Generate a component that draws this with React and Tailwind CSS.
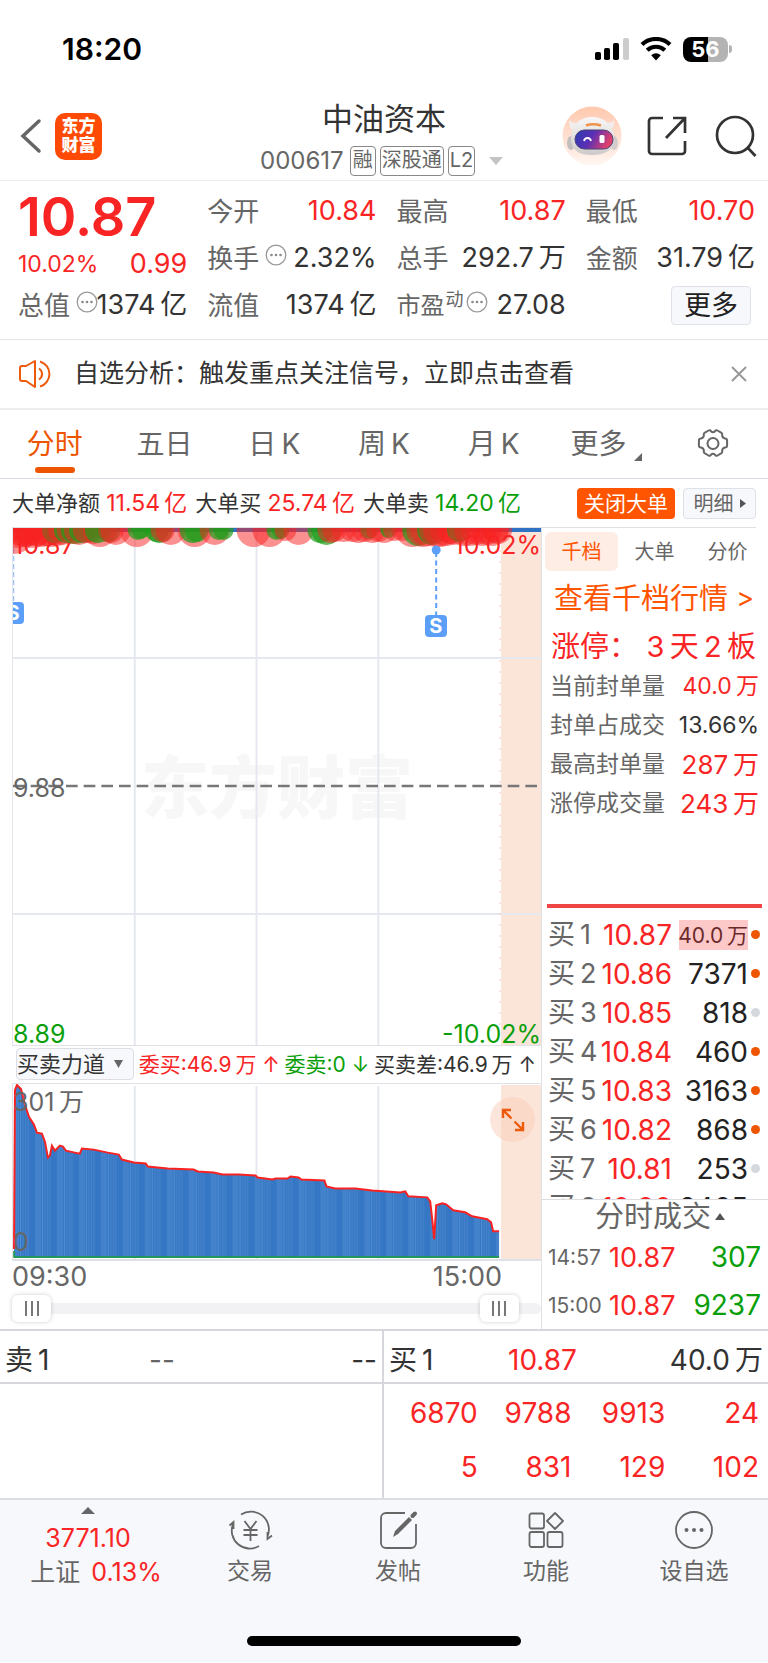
import React, { useState } from 'react';

const quoteColumns = [
  [
    { label: '今开', value: '10.84', up: true },
    { label: '换手', value: '2.32%', info: true },
    { label: '流值', value: '1374\u2009亿' },
  ],
  [
    { label: '最高', value: '10.87', up: true },
    { label: '总手', value: '292.7\u2009万' },
    { label: '市盈', sup: '动', value: '27.08', info: true },
  ],
];

const periods = ['分时', '五日', '日\u2009K', '周\u2009K', '月\u2009K'];

const limitStats = [
  { label: '当前封单量', value: '40.0\u2009万', style: 'text-[23px] text-[#f92525]' },
  { label: '封单占成交', value: '13.66%', style: 'text-[23px] text-[#333]' },
  { label: '最高封单量', value: '287\u2009万', style: 'text-[26px] text-[#f92525]' },
  { label: '涨停成交量', value: '243\u2009万', style: 'text-[26px] text-[#f92525]' },
];

const bids = [
  { level: 1, price: '10.87', volume: '40.0\u2009万', active: true },
  { level: 2, price: '10.86', volume: '7371', active: true },
  { level: 3, price: '10.85', volume: '818', active: false },
  { level: 4, price: '10.84', volume: '460', active: true },
  { level: 5, price: '10.83', volume: '3163', active: true },
  { level: 6, price: '10.82', volume: '868', active: true },
  { level: 7, price: '10.81', volume: '253', active: false },
  { level: 8, price: '10.80', volume: '2465', active: true },
];

const trades = [
  { time: '14:57', price: '10.87', volume: '307' },
  { time: '15:00', price: '10.87', volume: '9237' },
];

const queue = [
  ['6870', '9788', '9913', '24'],
  ['5', '831', '129', '102'],
];

// x, radius, color of the big-order bubbles along the price line
const R = '#f82222';
const G = '#1f9d1a';
const bubbles = [
  [0, 24, R], [4, 18, R], [8, 16, R], [12, 17, R], [16, 16, R], [20, 18, R], [24, 16, R], [28, 17, R],
  [33, 16, R], [38, 17, R], [42, 13, G], [44, 16, R], [50, 15, R], [54, 13, G], [58, 14, R], [62, 14, G],
  [66, 15, R], [69, 13, G], [73, 13, R], [78, 12, G], [80, 14, R], [87, 17, R], [85, 13, G], [96, 12, G],
  [103, 15, R], [98, 13, R], [124, 17, R], [125, 10, G], [128, 9, G], [144, 12, G], [147, 13, G],
  [150, 12, R], [158, 15, R], [182, 17, R], [180, 13, G], [184, 12, G], [202, 15, R], [206, 10, G],
  [211, 10, G], [241, 17, R], [257, 17, R], [264, 10, G], [268, 9, G], [273, 11, R], [286, 15, R],
  [308, 13, G], [314, 15, G], [318, 13, R], [322, 12, R], [331, 12, R], [340, 12, R], [346, 13, R],
  [352, 12, R], [357, 9, G], [360, 13, R], [366, 12, R], [372, 13, R], [376, 8, G], [382, 11, R],
  [390, 11, R], [400, 17, R], [406, 16, G], [411, 17, R], [414, 16, R], [420, 15, G], [424, 17, R],
  [428, 17, R], [434, 16, R], [438, 14, R], [442, 15, R], [447, 12, G], [452, 16, R], [458, 16, R],
  [464, 15, R], [470, 16, R], [475, 15, R], [480, 16, R], [484, 13, R], [486, 14, R],
];

const forceLine =
  '1,166 2,6 4,1 8,5 12,21 16,33 21,41 24,49 29,50 32,58 35,74 37,72 39,62 42,67 47,62 50,63 53,67 62,69 67,70 69,65 81,66 95,69 106,71 109,76 121,79 133,80 135,83 155,85 181,86 185,88 201,89 210,91 226,91 243,92 245,94 260,96 263,95 275,95 278,93 286,94 289,96 312,97 314,103 323,105 343,105 360,107 388,109 393,108 396,113 415,114 418,118 420,136 422,156 424,122 430,120 434,121 441,127 453,129 460,133 475,136 479,139 481,148 487,148';

const InfoDot = () => (
  <svg className="w-[22px] h-[22px] mb-2 shrink-0" viewBox="0 0 22 22">
    <circle cx="11" cy="11" r="9.8" fill="none" stroke="#999" strokeWidth="1.3" />
    <circle cx="6.5" cy="11" r="1.3" fill="#888" />
    <circle cx="11" cy="11" r="1.3" fill="#888" />
    <circle cx="15.5" cy="11" r="1.3" fill="#888" />
  </svg>
);

const QuoteItem = ({ label, sup, value, info, up }) => (
  <div className="flex items-center justify-between h-[47px] whitespace-nowrap">
    <span className="flex items-center text-[#666]">
      <span className={sup ? 'text-[24px]' : 'text-[26px]'}>{label}</span>
      {sup && <span className="mb-3 ml-px text-[18px]">{sup}</span>}
      {info && <span className={sup ? 'ml-[2px] flex' : 'ml-[6px] -mr-2 flex'}><InfoDot /></span>}
    </span>
    <span className={up ? 'text-[27px] text-[#f92525]' : 'text-[27px] text-[#333]'}>{value}</span>
  </div>
);

const StatusBar = () => (
  <div className="flex items-center justify-between h-[98px] pl-[62px] pr-9">
    <span className="text-[30px] font-semibold text-black">18:20</span>
    <div className="flex items-center gap-[11px]">
      <svg className="w-[34px] h-6" viewBox="0 0 34 24">
        <rect x="0" y="15" width="6" height="8" rx="1.8" />
        <rect x="9" y="11" width="6" height="12" rx="1.8" />
        <rect x="18" y="6" width="6" height="17" rx="1.8" />
        <rect x="28" y="1" width="6" height="22" rx="1.8" fill="#ccc" />
      </svg>
      <svg className="w-8 h-6" viewBox="0 0 32 24">
        <path d="M2 7.5a20.5 20.5 0 0 1 28 0" fill="none" stroke="#000" strokeWidth="4.2" />
        <path d="M7.2 13.2a13 13 0 0 1 17.6 0" fill="none" stroke="#000" strokeWidth="4.2" />
        <path d="M11.2 18.2a7 7 0 0 1 9.6 0L16 23.4z" />
      </svg>
      <div className="flex items-center gap-px">
        <span className="flex items-center justify-center w-[45px] h-[25px] rounded-lg bg-linear-to-r from-black from-55% to-[#b3b3b3] to-55% text-white text-[22px] font-bold leading-none">
          56
        </span>
        <span className="w-[3px] h-2 rounded-r-full bg-[#b3b3b3]"></span>
      </div>
    </div>
  </div>
);

const Robot = () => (
  <svg className="w-[60px] h-[60px]" viewBox="0 0 60 60">
    <defs>
      <linearGradient id="halo" x1="0" y1="0" x2="0" y2="1">
        <stop offset="0" stopColor="#ffc8ae" />
        <stop offset="1" stopColor="#fff6f2" />
      </linearGradient>
      <linearGradient id="shell" x1="0" y1="0" x2="0" y2="1">
        <stop offset="0" stopColor="#f8f6f6" />
        <stop offset="1" stopColor="#cfcaca" />
      </linearGradient>
      <linearGradient id="visor" x1="0" y1="0" x2="1" y2="0.3">
        <stop offset="0" stopColor="#2a3cb0" />
        <stop offset="0.5" stopColor="#5a2fb5" />
        <stop offset="1" stopColor="#e0406c" />
      </linearGradient>
    </defs>
    <circle cx="30" cy="30" r="29.5" fill="url(#halo)" />
    <path d="M7 14c0 5 1 8 4 11l7-8c-5 0-8 0-11-3zM52 14c1 5-1 8-4 11l-6-8c5 0 8 0 10-3z" fill="#f1eded" />
    <ellipse cx="9" cy="37" rx="4" ry="7" fill="#c3bebe" />
    <ellipse cx="52" cy="37" rx="4" ry="7" fill="#d2cccc" />
    <path d="M9 32c0-13 9-21 21-21s22 8 22 21c0 12-8 17-22 17S9 44 9 32z" fill="url(#shell)" />
    <rect x="13" y="24" width="38" height="19" rx="9.5" fill="url(#visor)" stroke="#4a4478" strokeWidth="1" />
    <path d="M24 19.5c4-1.5 10-1.5 15 0" fill="none" stroke="#f0934a" strokeWidth="2.5" />
    <path d="M22 35c1-4 6-4 7 0" fill="none" stroke="#fff" strokeWidth="1.8" />
    <rect x="37.5" y="29" width="5" height="8" rx="1.5" fill="#fff" />
  </svg>
);

const Header = () => (
  <header className="relative flex items-center justify-between h-[83px] pl-5 pr-[11px] pb-[6px] border-b border-[#ececef]">
    <div className="flex items-center gap-3">
      <button aria-label="返回">
        <svg className="w-[23px] h-9" viewBox="0 0 23 36">
          <path d="M19 3L3 18l16 15" fill="none" stroke="#666" strokeWidth="3.5" strokeLinecap="round" />
        </svg>
      </button>
      <a href="#home" className="flex items-center justify-center w-[47px] h-[47px] rounded-[10px] bg-[#ff4a05] text-white text-[17px]/[19px] font-black">
        <span>东方<br />财富</span>
      </a>
    </div>
    <button className="absolute inset-x-0 top-0 mx-auto w-[252px]">
      <span className="block mt-[2px] text-[31px]/[38px] text-[#333]">中油资本</span>
      <span className="flex items-center gap-1 mt-2 pl-[2px] text-[20px]/[26px] text-[#666] whitespace-nowrap">
        <span className="mr-[2px] text-[24px]">000617</span>
        <span className="h-[30px] px-[2px] border border-[#888] rounded">融</span>
        <span className="h-[30px] px-px border border-[#888] rounded">深股通</span>
        <span className="h-[30px] px-px border border-[#888] rounded">L2</span>
        <svg className="w-[14px] h-2 ml-[10px] shrink-0" viewBox="0 0 14 8">
          <path d="M0 0h14L7 8z" fill="#c4c4c4" />
        </svg>
      </span>
    </button>
    <div className="flex items-center">
      <button aria-label="智能助手" className="mr-[25px]"><Robot /></button>
      <button aria-label="分享" className="mr-7">
        <svg className="w-10 h-10" viewBox="0 0 40 40" fill="none" stroke="#333" strokeWidth="2.7">
          <path d="M16 2H5a3 3 0 0 0-3 3v30a3 3 0 0 0 3 3h30a3 3 0 0 0 3-3V25M26 2h12v15M38 2L19 22" />
        </svg>
      </button>
      <button aria-label="搜索">
        <svg className="w-[42px] h-[42px]" viewBox="0 0 42 42" fill="none" stroke="#333" strokeWidth="2.7">
          <circle cx="20" cy="20" r="18" />
          <path d="M32 32l8.5 9" />
        </svg>
      </button>
    </div>
  </header>
);

const Quote = () => (
  <section className="grid grid-cols-4 gap-x-5 pt-[7px] pb-[10px] pl-[18px] pr-[13px] border-b border-[#e6e6ea]">
    <div className="flex flex-col">
      <strong className="h-[57px] text-[54px]/[57px] font-semibold text-[#f92525]">10.87</strong>
      <div className="flex items-end justify-between h-[37px] leading-9 text-[#f92525]">
        <span className="text-[23px]">10.02%</span>
        <span className="text-[27px]">0.99</span>
      </div>
      <QuoteItem label="总值" value={'1374\u2009亿'} info />
    </div>
    {quoteColumns.map((col, i) => (
      <div key={i}>
        {col.map((item) => (
          <QuoteItem key={item.label} {...item} />
        ))}
      </div>
    ))}
    <div>
      <QuoteItem label="最低" value="10.70" up />
      <QuoteItem label="金额" value={'31.79\u2009亿'} />
      <div className="flex items-center justify-end h-[47px] pr-1">
        <button className="w-20 h-[39px] rounded border border-[#dfe1e8] bg-[#f7f8fb] text-[27px] leading-none text-[#222]">更多</button>
      </div>
    </div>
  </section>
);

const Notice = ({ onClose }) => (
  <div className="flex items-center h-[70px] pl-[18px] pr-5 border-b-2 border-[#ededf0]">
    <svg className="w-9 h-[30px]" viewBox="0 0 36 30" fill="none" stroke="#ee5a0c" strokeWidth="2">
      <path d="M17 2v26L8 22H4a2 2 0 0 1-2-2V9a2 2 0 0 1 2-2h4z" strokeLinejoin="round" />
      <path d="M21 9.5a6.5 6.5 0 0 1 0 11M22 2.5a13 13 0 0 1 0 25" />
    </svg>
    <a href="#analysis" className="ml-5 text-[25px] text-[#333] whitespace-nowrap">自选分析：触发重点关注信号，立即点击查看</a>
    <button aria-label="关闭" className="ml-auto" onClick={onClose}>
      <svg className="w-[18px] h-[18px]" viewBox="0 0 18 18">
        <path d="M2 2l14 14M16 2L2 16" stroke="#999" strokeWidth="2" />
      </svg>
    </button>
  </div>
);

const PeriodTabs = ({ period, setPeriod }) => (
  <nav className="grid grid-cols-7 h-[69px] border-b border-[#dcdce4] text-[28px] text-[#666]">
    {periods.map((p) => (
      <button
        key={p}
        onClick={() => setPeriod(p)}
        className={p === period ? 'flex flex-col items-center pt-[13px] text-[#ee5500]' : 'flex flex-col items-center pt-[13px]'}
      >
        <span className="leading-[42px]">{p}</span>
        {p === period && <span className="w-10 h-[6px] mt-[2px] rounded-full bg-[#ee5500]"></span>}
      </button>
    ))}
    <button className="flex items-start justify-center gap-2 pt-[13px] pl-[6px] leading-[42px]">
      更多
      <svg className="w-2 h-2 mt-[30px]" viewBox="0 0 8 8"><path d="M8 0v8H0z" fill="#666" /></svg>
    </button>
    <button aria-label="设置" className="flex items-center justify-center">
      <svg className="w-8 h-8" viewBox="0 0 32 32" fill="none" stroke="#666" strokeWidth="2">
        <path d="M11.5 2.5q1.5-1 2.5.7 2 2 4 0 1-1.7 2.5-.7l4 2.3q1.2 1 .6 2.5.3 2.7 3 3.2 1.9 0 2 2v5q-.1 2-2 2-2.7.5-3 3.2.6 1.5-.6 2.5l-4 2.3q-1.5 1-2.5-.7-2-2-4 0-1 1.7-2.5.7l-4-2.3q-1.2-1-.6-2.5-.3-2.7-3-3.2-1.9 0-2-2v-5q.1-2 2-2 2.7-.5 3-3.2-.6-1.5.6-2.5z" strokeLinejoin="round" />
        <circle cx="16" cy="15.5" r="5.5" />
      </svg>
    </button>
  </nav>
);

const SignalTag = () => (
  <span className="flex items-center justify-center w-[22px] h-[22px] rounded bg-[#5b9ff8] text-white text-[20px] font-bold leading-none">S</span>
);

const PriceChart = () => (
  <div className="relative h-[517px] border-l border-[#e3e5ea] overflow-hidden text-[25px] leading-5">
    <span className="absolute inset-x-0 top-[192px] text-center text-[68px]/[136px] font-black text-[#f7f7f7]">东方财富</span>
    <svg className="absolute inset-0 w-full h-full" viewBox="0 0 529 517" preserveAspectRatio="none">
      <rect x="489" y="0" width="40" height="517" fill="#fbe5d9" />
      <path d="M0 130h529M0 386h529M122 0v517M244 0v517M366 0v517" stroke="#e6e8ef" strokeWidth="2" />
      <path d="M0 258h529" stroke="#777" strokeWidth="2.4" strokeDasharray="11.7 6" />
      <path d="M488 22v480" stroke="#fbc9c0" strokeWidth="1" strokeDasharray="2 9" />
      <path d="M.5 20v58" stroke="#9cc3f8" strokeWidth="1.5" strokeDasharray="5 3" />
      <path d="M424 24v64" stroke="#5b9ff8" strokeWidth="2" strokeDasharray="5 3.5" />
    </svg>
    <span className="absolute left-0 top-[7px] text-[#f92525]">10.87</span>
    <span className="absolute right-0 top-[7px] text-[#f92525]">10.02%</span>
    <span className="absolute left-0 top-[250px] text-[#666]">9.88</span>
    <span className="absolute left-0 bottom-px text-[#0a9f0a]">8.89</span>
    <span className="absolute right-0 bottom-px text-[#0a9f0a]">-10.02%</span>
    <svg className="absolute inset-0 w-full h-full" viewBox="0 0 529 517" preserveAspectRatio="none">
      <path d="M0 2h529" stroke="#2f72c4" strokeWidth="4" />
      {bubbles.map(([x, r, color], i) => (
        <circle key={i} cx={x} cy="2" r={r} fill={color} fillOpacity={color === R ? 0.5 : 0.7} />
      ))}
      <circle cx="424" cy="22" r="4.5" fill="#5b9ff8" />
    </svg>
    <span className="absolute -left-[11px] top-[74px]"><SignalTag /></span>
    <span className="absolute left-[78%] top-[87px]"><SignalTag /></span>
  </div>
);

const ForceBar = () => (
  <div className="flex items-center justify-between h-[39px] pl-1 pr-[5px] border-y border-[#dfe1e6] text-[21px] whitespace-nowrap">
    <div className="relative w-[118px]">
      <select aria-label="副图指标" className="w-full h-8 p-0 rounded border border-[#dcdee4] bg-[#f7f8fb] text-[22px] leading-none text-[#333] appearance-none">
        <option>买卖力道</option>
      </select>
      <svg className="absolute right-[11px] top-3 w-[9px] h-2 pointer-events-none" viewBox="0 0 9 8"><path d="M0 0h9L4.5 8z" fill="#666" /></svg>
    </div>
    <span className="text-[#f92525]">委买:46.9{'\u2009'}万 ↑</span>
    <span className="text-[#0a9f0a]">委卖:0 ↓</span>
    <span className="text-[#333]">买卖差:46.9{'\u2009'}万 ↑</span>
  </div>
);

const ForceChart = () => (
  <div className="relative h-[177px] border-l border-b-2 border-[#dfe1e6] text-[25px] leading-none text-[#666]">
    <svg className="absolute inset-0 w-full h-full" viewBox="0 0 529 176" preserveAspectRatio="none">
      <defs>
        <pattern id="bars" width="22" height="176" patternUnits="userSpaceOnUse">
          <rect width="22" height="176" fill="#3577c4" />
          <path d="M1 0v176M3 0v176M5 0v176M7.5 0v176" stroke="#5590d3" strokeWidth="0.9" />
          <path d="M10 0v176M12.5 0v176M15 0v176" stroke="#4582cb" strokeWidth="1.2" />
        </pattern>
      </defs>
      <rect x="489" y="1" width="40" height="175" fill="#fbe5d9" />
      <path d="M122 2v174M244 2v174M366 2v174" stroke="#e6e8ef" strokeWidth="2" />
      <polygon points={`1,175 ${forceLine} 487,175`} fill="url(#bars)" />
      <polyline points={forceLine} fill="none" stroke="#f82222" strokeWidth="2" />
      <path d="M1 168v6h486" fill="none" stroke="#1f9d3a" strokeWidth="1.6" />
    </svg>
    <span className="absolute left-0 top-[6px]">301{'\u2009'}万</span>
    <span className="absolute left-0 bottom-1">0</span>
    <button aria-label="全屏" className="absolute right-[6px] top-[13px] flex items-center justify-center w-[45px] h-[45px] rounded-full bg-[#f9cdb8]/50">
      <svg className="w-6 h-6" viewBox="0 0 24 24" fill="none" stroke="#ee5a0c" strokeWidth="2.4">
        <path d="M10 2H2v8M2 2l8.5 8.5M14 22h8v-8M22 22l-8.5-8.5" />
      </svg>
    </button>
  </div>
);

const RangeSlider = () => {
  const [range, setRange] = useState([0, 955]);
  const thumb =
    'absolute inset-x-0 top-0 w-full h-[27px] appearance-none bg-transparent pointer-events-none [&::-webkit-slider-thumb]:pointer-events-auto [&::-webkit-slider-thumb]:appearance-none [&::-webkit-slider-thumb]:w-[39px] [&::-webkit-slider-thumb]:h-[27px] [&::-webkit-slider-thumb]:rounded-md [&::-webkit-slider-thumb]:bg-white [&::-webkit-slider-thumb]:shadow-[0_0_4px_rgba(0,0,0,0.2)] [&::-webkit-slider-thumb]:bg-[linear-gradient(90deg,#777_2px,transparent_2px,transparent_6px,#777_6px,#777_8px,transparent_8px,transparent_12px,#777_12px)] [&::-webkit-slider-thumb]:bg-[length:14px_15px] [&::-webkit-slider-thumb]:bg-center [&::-webkit-slider-thumb]:bg-no-repeat';
  return (
    <div className="relative flex items-center h-[27px] mt-[3px]">
      <div className="w-full h-[11px] rounded-full bg-[#f2f2f5]"></div>
      <input type="range" aria-label="开始时间" min="0" max="1000" value={range[0]} onChange={(e) => setRange([Number(e.target.value), range[1]])} className={thumb} />
      <input type="range" aria-label="结束时间" min="0" max="1000" value={range[1]} onChange={(e) => setRange([range[0], Number(e.target.value)])} className={thumb} />
    </div>
  );
};

const OrderBook = () => (
  <aside className="w-[227px] shrink-0 border-l border-[#dfe1e6] whitespace-nowrap">
    <div className="flex pt-1 pl-[3px] pr-1 text-[20px] text-[#666]">
      <button className="flex-1 h-[39px] rounded-md bg-[#feede5] text-[#ff5500]">千档</button>
      <button className="flex-1 h-[39px]">大单</button>
      <button className="flex-1 h-[39px]">分价</button>
    </div>
    <a href="#depth" className="flex items-center justify-between h-[55px] pl-3 pr-[14px] text-[29px] text-[#ff5500]">
      查看千档行情<span className="text-[27px]">&gt;</span>
    </a>
    <div className="flex items-center justify-between h-[41px] pl-[9px] pr-3 text-[29px] text-[#f92525]">
      <span>涨停：</span>
      <span>3{'\u2009'}天{'\u2009'}2{'\u2009'}板</span>
    </div>
    <table className="w-full">
      <tbody>
        {limitStats.map((s) => (
          <tr key={s.label} className="h-[39px] leading-none">
            <th className="p-0 pl-2 text-left text-[23px] font-normal text-[#666]">{s.label}</th>
            <td className={`p-0 pr-[9px] text-right ${s.style}`}>{s.value}</td>
          </tr>
        ))}
      </tbody>
    </table>
    <div className="h-1 mt-[81px] ml-[5px] mr-[6px] bg-[#f04545]"></div>
    <div className="h-[292px] pt-[7px] pl-[6px] pr-[8px] overflow-hidden border-b border-[#dcdde2]">
      <table className="w-full table-fixed">
        <tbody>
          {bids.map((b) => (
            <tr key={b.level} className="h-[39px] text-[28px] leading-none">
              <th className="p-0 w-[50px] text-left text-[27px] font-normal text-[#666]">买{'\u2009'}{b.level}</th>
              <td className="p-0 w-[74px] text-right text-[#f92525]">{b.price}</td>
              <td className="p-0 text-right text-[#222]">
                {b.level === 1 ? (
                  <span className="inline-flex items-center justify-end w-[69px] h-[30px] align-middle bg-[#fdc8c8] text-[21px] text-[#6b2a2a]">{b.volume}</span>
                ) : (
                  b.volume
                )}
              </td>
              <td className="p-0 w-3">
                <span className={b.active ? 'block ml-auto w-[9px] h-[9px] rounded-full bg-[#ee5500]' : 'block ml-auto w-[9px] h-[9px] rounded-full bg-[#d5d8de]'}></span>
              </td>
            </tr>
          ))}
        </tbody>
      </table>
    </div>
    <button className="flex items-center justify-center gap-1 w-full h-[33px] pl-[10px] text-[29px] leading-none text-[#666]">
      分时成交
      <svg className="w-[10px] h-[7px]" viewBox="0 0 10 7"><path d="M5 0l5 7H0z" fill="#555" /></svg>
    </button>
    <table className="w-full table-fixed">
      <tbody>
        {trades.map((t) => (
          <tr key={t.time} className="h-12 text-[27px] leading-none">
            <td className="p-0 pl-[6px] w-[67px] text-[21px] text-[#666]">{t.time}</td>
            <td className="p-0 text-[#f92525]">{t.price}</td>
            <td className="p-0 pr-[7px] text-right text-[28px] text-[#0a9f0a]">{t.volume}</td>
          </tr>
        ))}
      </tbody>
    </table>
  </aside>
);

const BestQuote = () => (
  <section className="grid grid-cols-2 border-t-2 border-[#d5d7dd] text-[28px]">
    <div className="border-r-2 border-[#d5d7dd]">
      <div className="grid grid-cols-3 items-center h-[53px] pt-[6px] px-[5px] border-b-2 border-[#d5d7dd] text-[#333]">
        <span>卖{'\u2009'}1</span>
        <span className="pl-5 text-[#666]">--</span>
        <span className="text-right">--</span>
      </div>
    </div>
    <div>
      <div className="grid grid-cols-[115fr_134fr_125fr] items-center h-[53px] pt-[6px] px-[5px] border-b-2 border-[#d5d7dd] text-[#333]">
        <span>买{'\u2009'}1</span>
        <span className="pl-1 text-[#f92525]">10.87</span>
        <span className="text-right">40.0{'\u2009'}万</span>
      </div>
      <div className="pt-[2px] pb-1 pr-[9px]">
        <table className="w-full table-fixed">
          <tbody>
            {queue.map((row, i) => (
              <tr key={i} className="h-[54px] text-right text-[28px] leading-none text-[#f92525]">
                {row.map((n) => (
                  <td key={n} className="p-0">{n}</td>
                ))}
              </tr>
            ))}
          </tbody>
        </table>
      </div>
    </div>
  </section>
);

const navItems = [
  {
    label: '交易',
    icon: (
      <>
        <path d="M11 4.5A18 18 0 0 1 37.5 26.5M29 36A18 18 0 0 1 3 14M-.5 15.5L3.5 12V19M42 25.5l-4.5 3.5V22" />
        <path d="M14.5 11l6 8 6-8M13.5 20h14M13.5 25h14M20.5 19v12" />
      </>
    ),
  },
  {
    label: '发帖',
    icon: (
      <>
        <path d="M27 3H8a5 5 0 0 0-5 5v25a5 5 0 0 0 5 5h25a5 5 0 0 0 5-5V14" />
        <path d="M15 27l2-6L31 7l3 3-14 14z" fill="#666" stroke="none" />
        <path d="M34.5 6l2.5-2.5" strokeWidth="4" strokeLinecap="round" />
      </>
    ),
  },
  {
    label: '功能',
    icon: (
      <>
        <rect x="3.5" y="3.5" width="14.5" height="15" rx="2" />
        <rect x="3.5" y="22" width="14.5" height="15" rx="2" />
        <rect x="21.5" y="22" width="15" height="15" rx="2" />
        <path d="M29 3l8 8-8 8-8-8z" strokeLinejoin="round" />
      </>
    ),
  },
  {
    label: '设自选',
    icon: (
      <>
        <circle cx="20" cy="20" r="18" />
        <g fill="#666" stroke="none">
          <circle cx="12.5" cy="20" r="2" />
          <circle cx="20" cy="20" r="2" />
          <circle cx="27.5" cy="20" r="2" />
        </g>
      </>
    ),
  },
];

const BottomNav = () => (
  <footer className="bg-[#f7f8fb] border-t-2 border-[#dcdde2]">
    <nav className="grid grid-cols-[176fr_148fr_148fr_148fr_148fr] h-[104px] text-[#666]">
      <a href="#index" className="flex flex-col items-center pt-[7px] text-[25px]">
        <svg className="w-[14px] h-[7px]" viewBox="0 0 14 7"><path d="M7 0l7 7H0z" fill="#666" /></svg>
        <span className="mt-2 leading-8 text-[#f92525]">3771.10</span>
        <span className="pl-4 leading-[36px]">上证 <span className="ml-1 text-[#f92525]">0.13%</span></span>
      </a>
      {navItems.map((item) => (
        <a key={item.label} href={`#${item.label}`} className="flex flex-col items-center pt-[10px] text-[23px]">
          <svg className="w-10 h-10 overflow-visible" viewBox="0 0 40 40" fill="none" stroke="#666" strokeWidth="1.8">
            {item.icon}
          </svg>
          <span className="mt-1 leading-[34px]">{item.label}</span>
        </a>
      ))}
    </nav>
    <div className="flex justify-center pt-8 pb-4">
      <span className="w-[274px] h-[10px] rounded-full bg-black"></span>
    </div>
  </footer>
);

const App = () => {
  const [period, setPeriod] = useState('分时');
  const [showNotice, setShowNotice] = useState(true);

  return (
    <div className="w-full bg-white font-['Inter','Noto_Sans_CJK_SC',sans-serif]">
      <StatusBar />
      <Header />
      <Quote />
      {showNotice && <Notice onClose={() => setShowNotice(false)} />}
      <PeriodTabs period={period} setPeriod={setPeriod} />
      <div className="flex items-center h-12 pt-px pl-3 pr-3 text-[22px] whitespace-nowrap text-[#333]">
        <span>大单净额 <span className="text-[23px] text-[#f92525]">11.54{'\u2009'}亿</span></span>
        <span className="ml-2">大单买 <span className="text-[23px] text-[#f92525]">25.74{'\u2009'}亿</span></span>
        <span className="ml-2">大单卖 <span className="text-[23px] text-[#0a9f0a]">14.20{'\u2009'}亿</span></span>
        <button className="ml-auto w-[98px] h-[31px] rounded bg-[#ff5500] text-[21px] leading-none text-white">关闭大单</button>
        <button className="flex items-center justify-center gap-[6px] ml-2 w-[73px] h-[31px] rounded border border-[#dfe1e8] bg-[#f7f8fb] text-[20px] leading-none text-[#666]">
          明细
          <svg className="w-[6px] h-[9px]" viewBox="0 0 6 9"><path d="M0 0l6 4.5L0 9z" fill="#555" /></svg>
        </button>
      </div>
      <div className="h-px mx-3 bg-[#dfe1e6]"></div>
      <main className="flex">
        <div className="flex-1 min-w-0 pl-3">
          <PriceChart />
          <ForceBar />
          <ForceChart />
          <div className="flex items-center justify-between h-[31px] pr-[39px] text-[27px] leading-none text-[#666]">
            <span>09:30</span>
            <span>15:00</span>
          </div>
          <RangeSlider />
        </div>
        <OrderBook />
      </main>
      <BestQuote />
      <BottomNav />
    </div>
  );
};

export default App;
